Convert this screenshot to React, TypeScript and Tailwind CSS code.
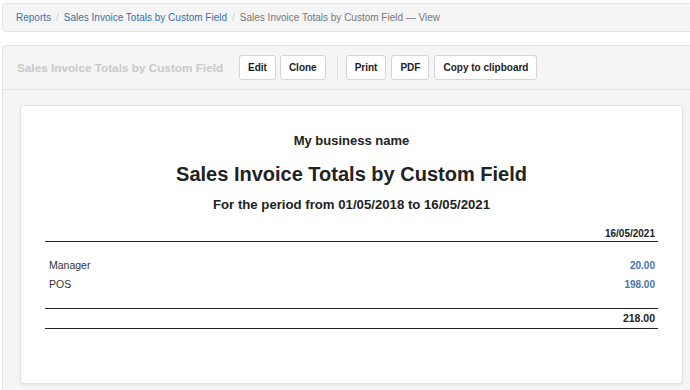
import React from "react";

const font = { fontFamily: '"Liberation Sans", Arial, sans-serif' };

const rows = [
  { label: "Manager", amount: "20.00" },
  { label: "POS", amount: "198.00" },
];

const Btn = ({ children }: { children: React.ReactNode }) => (
  <button className="h-[25px] px-[8px] bg-white border border-[#d4d4d4] rounded-[3px] text-[10px] text-[#222] font-bold leading-none">
    {children}
  </button>
);

export default function App() {
  return (
    <div className="w-[690px] h-[390px] overflow-hidden bg-white pt-[3px]" style={font}>
      {/* breadcrumb */}
      <div className="ml-[2px] w-[720px] h-[29px] flex items-center gap-[5px] px-[13px] bg-[#f5f5f5] border border-[#e3e3e3] rounded-[4px] text-[10px]">
        <span className="text-[#3b6ea8]">Reports</span>
        <span className="text-[#ccc]">/</span>
        <span className="text-[#3b6ea8]">Sales Invoice Totals by Custom Field</span>
        <span className="text-[#ccc]">/</span>
        <span className="text-[#777]">Sales Invoice Totals by Custom Field — View</span>
      </div>

      {/* report panel */}
      <div className="mt-[13px] ml-[2px] w-[720px] bg-[#f5f5f5] border border-[#e3e3e3] rounded-[4px]">
        <div className="h-[44px] flex items-center px-[14px] border-b border-[#e3e3e3]">
          <span className="text-[11.75px] font-bold text-[#c8c8c8] w-[222px]">
            Sales Invoice Totals by Custom Field
          </span>
          <div className="flex items-center gap-[4px]">
            <Btn>Edit</Btn>
            <Btn>Clone</Btn>
          </div>
          <div className="w-px h-[26px] bg-[#ddd] ml-[11px] mr-[8px]" />
          <div className="flex items-center gap-[5px]">
            <Btn>Print</Btn>
            <Btn>PDF</Btn>
            <Btn>Copy to clipboard</Btn>
          </div>
        </div>

        <div className="pl-[17px] pt-[15px] pb-[10px]">
          <div className="w-[663px] h-[279px] bg-white border border-[#e0e0e0] rounded-[3px] shadow-[0_1px_2px_rgba(0,0,0,0.08)] pt-[27px] px-[24px] text-[#222]">
            <div className="text-center text-[13px] leading-[16px] font-bold">My business name</div>
            <div className="text-center text-[20px] leading-[24px] font-bold mt-[13px]">
              Sales Invoice Totals by Custom Field
            </div>
            <div className="text-center text-[13.2px] leading-[18px] font-bold mt-[10px]">
              For the period from 01/05/2018 to 16/05/2021
            </div>

            <div className="mt-[12px] border-b-[1.5px] border-[#222] flex justify-end pr-[3px] text-[10px] font-bold leading-[15px]">
              16/05/2021
            </div>

            <div className="pt-[14px] pb-[14px] border-b-[1.5px] border-[#222]">
              {rows.map((r) => (
                <div key={r.label} className="flex justify-between items-center h-[19px] pl-[4px] pr-[3px]">
                  <span className="text-[10.5px] text-[#333]">{r.label}</span>
                  <span className="text-[10px] font-bold text-[#4a74a8]">{r.amount}</span>
                </div>
              ))}
            </div>

            <div className="h-[20px] border-b-[1.5px] border-[#222] flex items-center justify-end pr-[3px] text-[10.5px] font-bold">
              218.00
            </div>
          </div>
        </div>
      </div>
    </div>
  );
}
